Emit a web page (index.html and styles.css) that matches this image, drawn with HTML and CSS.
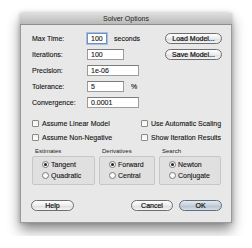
FILE: index.html
```html
<!DOCTYPE html>
<html lang="en">
<head>
    <meta charset="UTF-8">
    <title>Solver Options</title>
    <link rel="stylesheet" href="styles.css">
</head>
<body>
    <div class="window">
        <div class="titlebar">Solver Options</div>

        <div class="content">
            <!-- Numeric settings -->
            <div class="fields">
                <label for="maxTime">Max Time:</label>
                <div class="cell"><input id="maxTime" class="field short focus" value="100"><span class="unit">seconds</span></div>
                <button class="btn">Load Model...</button>

                <label for="iterations">Iterations:</label>
                <div class="cell"><input id="iterations" class="field mid" value="100"></div>
                <button class="btn">Save Model...</button>

                <label for="precision">Precision:</label>
                <div class="cell"><input id="precision" class="field wide" value="1e-06"></div>
                <span></span>

                <label for="tolerance">Tolerance:</label>
                <div class="cell"><input id="tolerance" class="field mid" value="5"><span class="unit pct">%</span></div>
                <span></span>

                <label for="convergence">Convergence:</label>
                <div class="cell"><input id="convergence" class="field wide" value="0.0001"></div>
                <span></span>
            </div>

            <!-- Checkboxes -->
            <div class="checks">
                <div class="check"><span class="box"></span>Assume Linear Model</div>
                <div class="check"><span class="box"></span>Use Automatic Scaling</div>
                <div class="check"><span class="box"></span>Assume Non-Negative</div>
                <div class="check"><span class="box"></span>Show Iteration Results</div>
            </div>

            <!-- Radio groups -->
            <div class="groups">
                <div class="group">
                    <div class="group-title">Estimates</div>
                    <div class="group-box">
                        <div class="radio"><span class="dot on"></span>Tangent</div>
                        <div class="radio"><span class="dot"></span>Quadratic</div>
                    </div>
                </div>
                <div class="group">
                    <div class="group-title">Derivatives</div>
                    <div class="group-box">
                        <div class="radio"><span class="dot on"></span>Forward</div>
                        <div class="radio"><span class="dot"></span>Central</div>
                    </div>
                </div>
                <div class="group">
                    <div class="group-title">Search</div>
                    <div class="group-box">
                        <div class="radio"><span class="dot on"></span>Newton</div>
                        <div class="radio"><span class="dot"></span>Conjugate</div>
                    </div>
                </div>
            </div>

            <!-- Dialog buttons -->
            <div class="actions">
                <button class="btn help">Help</button>
                <div class="right">
                    <button class="btn cancel">Cancel</button>
                    <button class="btn ok">OK</button>
                </div>
            </div>
        </div>
    </div>
</body>
</html>
```

FILE: styles.css
```css
* {
    margin: 0;
    padding: 0;
    box-sizing: border-box;
}

body {
    font-family: 'Liberation Sans', Arial, sans-serif;
    font-size: 7px;
    color: #111;
    background: #ffffff;
    padding: 13px 20px;
    -webkit-text-stroke: 0.1px;
}

.window {
    width: 212px;
    background-color: #e8e8e8;
    border: 1px solid #9a9a9a;
    border-top: none;
    box-shadow: 0 7px 12px rgba(0, 0, 0, 0.45), 0 0 4px rgba(0, 0, 0, 0.2);
}

.titlebar {
    height: 12px;
    line-height: 12px;
    text-align: center;
    color: #222;
    background: linear-gradient(#dedede, #b9b9b9);
    border-bottom: 1px solid #8e8e8e;
    margin: 0 -1px;
    -webkit-text-stroke: 0;
}

.content {
    padding: 5px 9px 11px 11px;
}

.fields {
    display: grid;
    grid-template-columns: 55px 1fr 57px;
    grid-auto-rows: 16px;
    align-items: center;
}

.cell {
    display: flex;
    align-items: center;
}

.field {
    height: 11px;
    font-family: inherit;
    font-size: 7px;
    color: #111;
    padding: 0 3px;
    background: #fff;
    border: 1px solid #9c9c9c;
    border-top-color: #7c7c7c;
    outline: none;
    -webkit-text-stroke: 0.1px;
}

.field.short { width: 20px; }
.field.mid { width: 37px; }
.field.wide { width: 52px; }

.field.focus {
    border-color: #6f8fbf;
    box-shadow: 0 0 0 1px #a6bfe2;
}

.unit {
    margin-left: 7px;
}

.btn {
    height: 11px;
    font-family: inherit;
    font-size: 7px;
    color: #111;
    border: 1px solid #6e6e6e;
    border-radius: 6px;
    background: linear-gradient(#ffffff, #ececec 50%, #dcdcdc 51%, #f4f4f4);
    cursor: pointer;
    -webkit-text-stroke: 0.2px;
}

.checks {
    display: grid;
    grid-template-columns: 109px 1fr;
    grid-auto-rows: 14px;
    align-items: center;
    margin-top: 6px;
}

.check {
    display: flex;
    align-items: center;
}

.box {
    width: 7px;
    height: 7px;
    margin-right: 3px;
    background: linear-gradient(#f2f2f2, #ffffff);
    border: 1px solid #8a8a8a;
    border-radius: 1px;
}

.groups {
    display: grid;
    grid-template-columns: 63px 56px 62px;
    column-gap: 4px;
    margin-top: 4px;
}

.group-title {
    font-size: 6px;
    height: 8px;
    line-height: 7px;
    padding-left: 3px;
    color: #222;
    -webkit-text-stroke: 0;
}

.group-box {
    height: 29px;
    padding: 2px 0 0 9px;
    background-color: #e0e0e0;
    border: 1px solid #c6c6c6;
    border-radius: 2px;
}

.radio {
    display: flex;
    align-items: center;
    height: 11px;
}

.dot {
    width: 7px;
    height: 7px;
    margin-right: 2px;
    border: 1px solid #7a7a7a;
    border-radius: 50%;
    background: #fafafa;
    display: flex;
    align-items: center;
    justify-content: center;
}

.dot.on::after {
    content: '';
    width: 3px;
    height: 3px;
    border-radius: 50%;
    background: #222;
}

.actions {
    display: flex;
    justify-content: space-between;
    margin-top: 15px;
}

.help {
    width: 43px;
    margin-left: -1px;
}

.right {
    display: flex;
    gap: 6px;
}

.cancel {
    width: 42px;
}

.ok {
    width: 43px;
    border-color: #5f6f82;
    background: linear-gradient(#e4e9ef, #c6cfd9 50%, #b4bfcc 51%, #d7dee6);
}
```
